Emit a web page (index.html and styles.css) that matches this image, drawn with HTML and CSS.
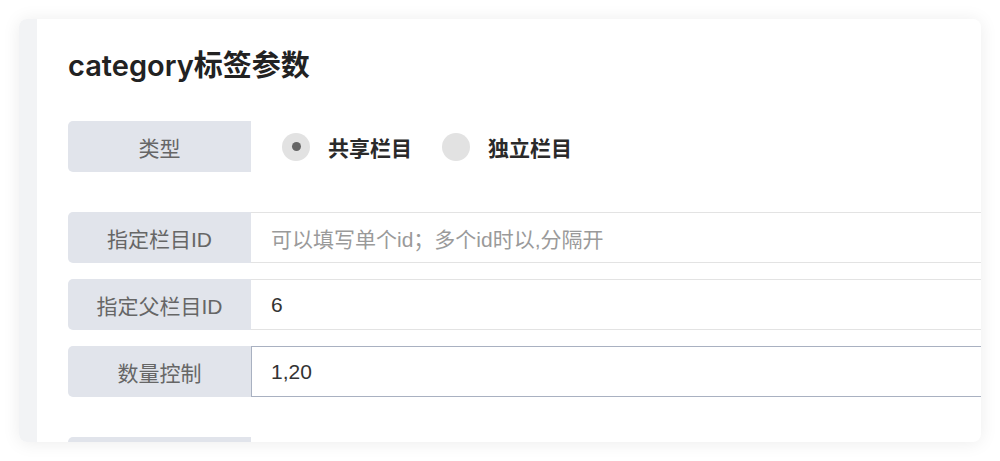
FILE: index.html
```html
<!DOCTYPE html>
<html lang="zh-CN">
<head>
<meta charset="utf-8">
<title>category标签参数</title>
<link rel="stylesheet" href="styles.css">
</head>
<body>
<div class="card">
  <div class="strip"></div>
  <div class="content">
    <h2 class="title">category标签参数</h2>

    <div class="row">
      <div class="label">类型</div>
      <div class="radios">
        <label class="radio"><span class="dot checked"></span><span class="rtext">共享栏目</span></label>
        <label class="radio"><span class="dot"></span><span class="rtext">独立栏目</span></label>
      </div>
    </div>

    <div class="group">
      <div class="row">
        <div class="label">指定栏目ID</div>
        <div class="input placeholder">可以填写单个id；多个id时以,分隔开</div>
      </div>
      <div class="row">
        <div class="label">指定父栏目ID</div>
        <div class="input">6</div>
      </div>
      <div class="row">
        <div class="label">数量控制</div>
        <div class="input focus">1,20</div>
      </div>
    </div>

    <div class="row last">
      <div class="label"></div>
    </div>
  </div>
</div>
</body>
</html>
```

FILE: styles.css
```css
* { box-sizing: border-box; }

html, body {
  margin: 0;
  padding: 0;
  background: #ffffff;
}

body {
  font-family: "Liberation Sans", "Noto Sans CJK SC", sans-serif;
  padding: 19px;
  height: 461px;
  overflow: hidden;
}

.card {
  width: 962px;
  height: 423px;
  border-radius: 8px;
  overflow: hidden;
  display: flex;
  background: #ffffff;
  box-shadow: 0 1px 18px rgba(0, 0, 0, 0.08);
}

.strip {
  width: 18px;
  flex: none;
  background: #f2f3f5;
}

.content {
  flex: none;
  width: 1000px;
  padding: 27px 0 0 31px;
}

.title {
  margin: 0;
  font-family: "Inter", "Noto Sans CJK SC", sans-serif;
  font-size: 29px;
  line-height: 40px;
  font-weight: 600;
  color: #222222;
}

.row {
  display: flex;
  height: 51px;
  margin-top: 35px;
}

.group {
  margin-top: 40px;
  display: flex;
  flex-direction: column;
  gap: 16px;
}

.group .row { margin-top: 0; }

.row.last { margin-top: 40px; }

.label {
  width: 183px;
  flex: none;
  background: #e1e4eb;
  border-radius: 5px 0 0 5px;
  color: #666666;
  font-size: 21px;
  display: flex;
  align-items: center;
  justify-content: center;
}

.radios {
  display: flex;
  align-items: center;
  padding-left: 31px;
  gap: 30px;
}

.radio {
  display: flex;
  align-items: center;
  gap: 18px;
}

.dot {
  width: 28px;
  height: 28px;
  border-radius: 50%;
  background: #e2e2e2;
  display: flex;
  align-items: center;
  justify-content: center;
}

.dot.checked::after {
  content: "";
  width: 9px;
  height: 9px;
  border-radius: 50%;
  background: #666666;
}

.rtext {
  font-size: 21px;
  font-weight: 700;
  color: #2a2a2a;
}

.input {
  flex: 1;
  border: 1px solid #e3e3e3;
  border-left: none;
  background: #ffffff;
  display: flex;
  align-items: center;
  padding-left: 20px;
  font-size: 21px;
  color: #333333;
}

.input.placeholder { color: #9a9a9a; }

.input.focus {
  border: 1px solid #a9b1c1;
  padding-left: 19px;
}
```
